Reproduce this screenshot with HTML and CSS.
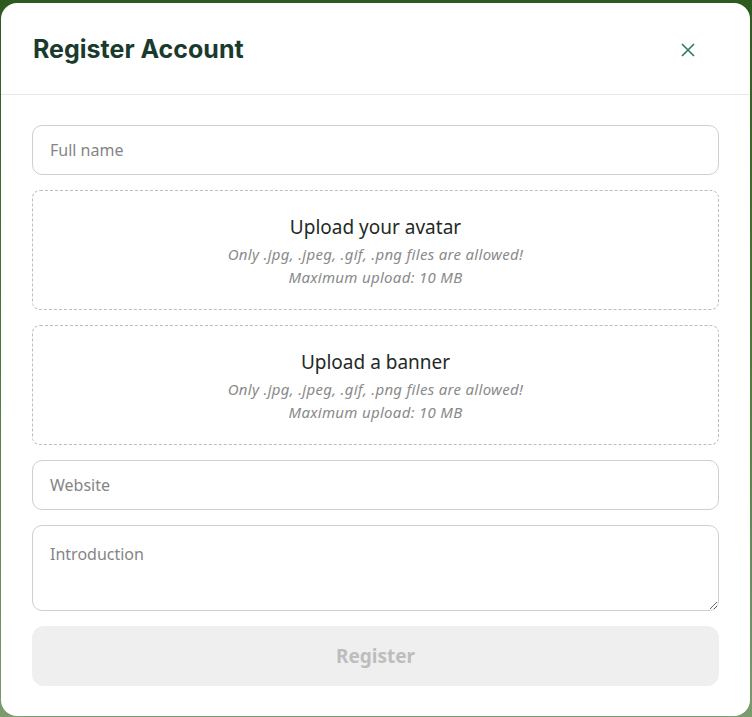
FILE: index.html
```html
<!DOCTYPE html>
<html lang="en">
<head>
<meta charset="UTF-8" />
<meta name="viewport" content="width=device-width, initial-scale=1.0">
<title>Register Account</title>
<link rel="stylesheet" href="styles.css">
</head>
<body>

<div class="modal">
  <header class="modal-header">
    <h1>Register Account</h1>
    <button class="close" aria-label="Close">
      <svg width="14" height="14" viewBox="0 0 14 14"><path d="M1 1L13 13M13 1L1 13" stroke="currentColor" stroke-width="1.6" fill="none"/></svg>
    </button>
  </header>

  <form class="modal-body">
    <input class="field" type="text" placeholder="Full name">

    <label class="upload">
      <span class="upload-title">Upload your avatar</span>
      <span class="upload-note">Only .jpg, .jpeg, .gif, .png files are allowed!</span>
      <span class="upload-note">Maximum upload: 10 MB</span>
    </label>

    <label class="upload">
      <span class="upload-title">Upload a banner</span>
      <span class="upload-note">Only .jpg, .jpeg, .gif, .png files are allowed!</span>
      <span class="upload-note">Maximum upload: 10 MB</span>
    </label>

    <input class="field" type="text" placeholder="Website">
    <textarea class="field area" placeholder="Introduction"></textarea>

    <button class="submit" type="button" disabled>Register</button>
  </form>
</div>

</body>
</html>
```

FILE: styles.css
```css
/* Base styles */
body {
  margin: 0;
  height: 717px;
  overflow: hidden;
  font-family: 'Noto Sans', sans-serif;
  background: linear-gradient(180deg, #2d5a1e 0%, #4d7a3c 50%, #7b9a6e 100%);
  color: #222;
}

.modal {
  margin: 3px 2px 0 1px;
  height: 713px;
  box-sizing: border-box;
  background: white;
  border-radius: 16px;
  display: flex;
  flex-direction: column;
}

/* Header */
.modal-header {
  display: flex;
  align-items: center;
  justify-content: space-between;
  height: 91px;
  padding: 0 55px 0 32px;
  border-bottom: 1px solid #e8e8e8;
  flex-shrink: 0;
}

.modal-header h1 {
  margin: 0;
  font-family: 'Inter', sans-serif;
  font-size: 25px;
  font-weight: 700;
  color: #1b3a2e;
}

.close {
  background: none;
  border: none;
  padding: 0;
  color: #2f7a5a;
  cursor: pointer;
  display: flex;
  margin-top: 2px;
}

/* Form */
.modal-body {
  display: flex;
  flex-direction: column;
  gap: 15px;
  padding: 30px 31px;
}

.field {
  height: 50px;
  box-sizing: border-box;
  border: 1px solid #cfcfcf;
  border-radius: 10px;
  padding: 0 17px;
  font-family: inherit;
  font-size: 16px;
  color: #333;
  outline: none;
}

.field::placeholder {
  color: #858585;
}

.area {
  height: 86px;
  padding-top: 17px;
  resize: vertical;
}

.upload {
  height: 120px;
  box-sizing: border-box;
  border: 1px dashed #bdbdbd;
  border-radius: 8px;
  display: flex;
  flex-direction: column;
  align-items: center;
  justify-content: center;
  cursor: pointer;
}

.upload-title {
  font-size: 19px;
  color: #1f2a25;
  line-height: 26px;
  margin-top: 2px;
  margin-bottom: 3px;
}

.upload-note {
  font-size: 15px;
  font-style: italic;
  letter-spacing: 0.3px;
  color: #8a8a8a;
  line-height: 23px;
}

.submit {
  height: 60px;
  border: none;
  border-radius: 12px;
  background: #efefef;
  color: #bdbdbd;
  font-family: inherit;
  font-size: 19px;
  font-weight: 700;
}
```
